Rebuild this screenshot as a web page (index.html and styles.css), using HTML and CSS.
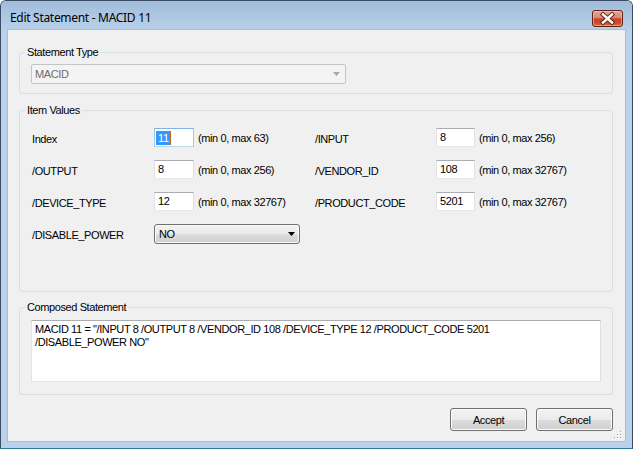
FILE: index.html
```html
<!DOCTYPE html>
<html>
<head>
<meta charset="utf-8">
<title>Edit Statement - MACID 11</title>
<link rel="stylesheet" href="styles.css">
</head>
<body>
<div class="window">
  <div class="titlebar">
    <span class="title">Edit Statement - MACID 11</span>
    <button class="close" aria-label="Close">
      <svg width="29" height="15" viewBox="0 0 29 15">
        <path d="M10 3.5 L19 11.5 M19 3.5 L10 11.5" stroke="#6b2a1c" stroke-width="4.4" stroke-linecap="square" fill="none"/>
        <path d="M10 3.5 L19 11.5 M19 3.5 L10 11.5" stroke="#ffffff" stroke-width="2.4" stroke-linecap="square" fill="none"/>
      </svg>
    </button>
  </div>
  <div class="client">
    <fieldset class="group g1">
      <legend>Statement Type</legend>
      <div class="combo disabled">
        <span>MACID</span>
        <svg class="arrow" width="7" height="4" viewBox="0 0 7 4"><path d="M0 0 H7 L3.5 4 Z" fill="#a7a7a7"/></svg>
      </div>
    </fieldset>

    <fieldset class="group g2">
      <legend>Item Values</legend>
      <div class="items">
        <span class="lbl">Index</span>
        <div class="field focus"><span class="sel">11</span><span class="caret"></span></div>
        <span class="hint">(min 0, max 63)</span>
        <span class="lbl">/INPUT</span>
        <div class="field">8</div>
        <span class="hint">(min 0, max 256)</span>

        <span class="lbl">/OUTPUT</span>
        <div class="field">8</div>
        <span class="hint">(min 0, max 256)</span>
        <span class="lbl">/VENDOR_ID</span>
        <div class="field">108</div>
        <span class="hint">(min 0, max 32767)</span>

        <span class="lbl">/DEVICE_TYPE</span>
        <div class="field">12</div>
        <span class="hint">(min 0, max 32767)</span>
        <span class="lbl">/PRODUCT_CODE</span>
        <div class="field">5201</div>
        <span class="hint">(min 0, max 32767)</span>

        <span class="lbl">/DISABLE_POWER</span>
        <div class="combo active">
          <span>NO</span>
          <svg class="arrow" width="7" height="4" viewBox="0 0 7 4"><path d="M0 0 H7 L3.5 4 Z" fill="#000"/></svg>
        </div>
      </div>
    </fieldset>

    <fieldset class="group g3">
      <legend>Composed Statement</legend>
      <div class="textarea">MACID 11 = "/INPUT 8 /OUTPUT 8 /VENDOR_ID 108 /DEVICE_TYPE 12 /PRODUCT_CODE 5201<br>/DISABLE_POWER NO"</div>
    </fieldset>

    <div class="buttons">
      <button class="btn">Accept</button>
      <button class="btn">Cancel</button>
    </div>

    <svg class="grip" width="8" height="8" viewBox="0 0 8 8">
      <g fill="#ffffff">
        <rect x="7" y="1" width="1" height="1"/><rect x="4" y="4" width="1" height="1"/><rect x="7" y="4" width="1" height="1"/>
        <rect x="1" y="7" width="1" height="1"/><rect x="4" y="7" width="1" height="1"/><rect x="7" y="7" width="1" height="1"/>
      </g>
      <g fill="#a0a0a0">
        <rect x="6" y="0" width="1" height="1"/><rect x="3" y="3" width="1" height="1"/><rect x="6" y="3" width="1" height="1"/>
        <rect x="0" y="6" width="1" height="1"/><rect x="3" y="6" width="1" height="1"/><rect x="6" y="6" width="1" height="1"/>
      </g>
    </svg>
  </div>
</div>
</body>
</html>
```

FILE: styles.css
```css
* {
  box-sizing: border-box;
}

html, body {
  margin: 0;
  background: #ffffff;
}

body {
  font-family: "Liberation Sans", Arial, sans-serif;
  font-size: 11px;
  letter-spacing: -0.4px;
  color: #000000;
}

.window {
  width: 633px;
  height: 449px;
  border: 1px solid #3a4d63;
  border-bottom-color: #2f7f98;
  border-radius: 6px 6px 0 0;
  background: #b9d1ea;
  display: flex;
  flex-direction: column;
  overflow: hidden;
}

.titlebar {
  height: 29px;
  flex: none;
  display: flex;
  justify-content: space-between;
  align-items: flex-start;
  padding: 0 9px 0 9px;
  background: linear-gradient(#a0bbd9 0%, #adc7e3 50%, #b9d1ea 100%);
}

.title {
  font-family: "Noto Sans", "Liberation Sans", sans-serif;
  font-size: 12px;
  letter-spacing: -0.3px;
  line-height: 16px;
  margin-top: 9px;
  color: #000000;
}

.close {
  width: 31px;
  height: 17px;
  margin-top: 9px;
  padding: 0;
  border: 1px solid #5c2418;
  border-radius: 3px;
  background: linear-gradient(#e3a596 0%, #d98877 45%, #c5452a 52%, #cf4a22 80%, #e0703a 100%);
  box-shadow: inset 0 0 0 1px rgba(255, 220, 210, 0.45);
  display: flex;
  align-items: center;
  justify-content: center;
}

.close svg {
  display: block;
}

.client {
  flex: 1;
  margin: 0 7px 7px 7px;
  background: #f0f0f0;
  outline: 1px solid #a7bdd5;
  padding: 16px 12px 10px 11px;
  display: flex;
  flex-direction: column;
  position: relative;
}

.group {
  margin: 0;
  min-width: 0;
  border: 1px solid #d5dfe5;
  border-radius: 3px;
  padding: 5px 11px 9px 11px;
}

.group legend {
  padding: 0 2px;
  margin-left: -6px;
  line-height: 13px;
}

.g2 {
  margin-top: 10px;
  padding: 11px 12px 47px 12px;
}

.g2 legend {
  margin-left: -7px;
}

.g3 {
  margin-top: 9px;
  padding: 6px 11px 12px 11px;
}

.combo {
  height: 20px;
  display: flex;
  align-items: center;
  justify-content: space-between;
}

.combo .arrow {
  display: block;
}

.combo.disabled {
  width: 315px;
  border: 1px solid #c3c6c9;
  border-radius: 2px;
  background: #f4f4f4;
  color: #6d6d6d;
  padding: 0 5px 0 3px;
}

.combo.active {
  grid-column: 2 / span 2;
  width: 146px;
  border: 1px solid #707070;
  border-radius: 3px;
  background: linear-gradient(#f2f2f2 0%, #ebebeb 50%, #dddddd 51%, #cfcfcf 100%);
  box-shadow: inset 0 0 0 1px #fafafa;
  padding: 0 4px 0 4px;
}

.items {
  display: grid;
  grid-template-columns: 122px 40px 121px 121px 39px auto;
  grid-auto-rows: 20px;
  row-gap: 12px;
  align-items: center;
}

.lbl {
  white-space: nowrap;
  padding-top: 2px;
}

.hint {
  padding-left: 4px;
  white-space: nowrap;
}

.field {
  align-self: start;
  height: 19px;
  background: #ffffff;
  border: 1px solid;
  border-color: #abadb3 #dbdfe6 #e3e9ef #e2e3ea;
  padding: 0 3px;
  line-height: 17px;
  display: flex;
  align-items: center;
}

.field.focus {
  border-color: #7eb4ea #a4c9e3 #b7d9ed #a4c9e3;
  padding-left: 1px;
}

.sel {
  background: #3399ff;
  color: #ffffff;
  line-height: 14px;
  padding: 0 1px 0 2px;
}

.caret {
  width: 1px;
  height: 14px;
  background: #c56a1f;
}

.textarea {
  height: 62px;
  background: #ffffff;
  border: 1px solid;
  border-color: #abadb3 #dbdfe6 #e3e9ef #e2e3ea;
  padding: 2px 3px;
  line-height: 13px;
}

.buttons {
  margin-top: 13px;
  display: flex;
  justify-content: flex-end;
  gap: 9px;
}

.btn {
  width: 77px;
  height: 23px;
  padding: 0;
  border: 1px solid #707070;
  border-radius: 3px;
  background: linear-gradient(#f2f2f2 0%, #ebebeb 50%, #dddddd 51%, #cfcfcf 100%);
  box-shadow: inset 0 0 0 1px #fbfbfb;
  font: inherit;
  letter-spacing: inherit;
  color: #000000;
}

.grip {
  position: absolute;
  right: 3px;
  bottom: 2px;
  display: block;
}
```
